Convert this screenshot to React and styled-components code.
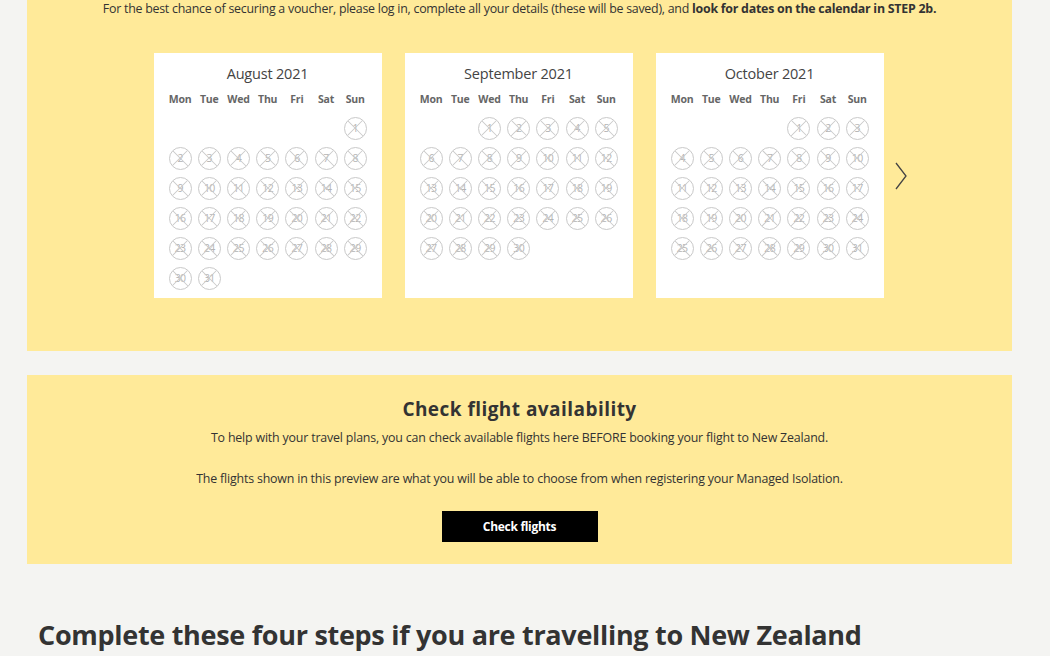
import React from "react";
import styled, { createGlobalStyle } from "styled-components";

const Global = createGlobalStyle`
  html, body { margin: 0; padding: 0; background: #f4f4f2; }
  body { font-family: "Open Sans", "Liberation Sans", sans-serif; color: #333; }
`;

const Page = styled.div`
  width: 1050px;
  height: 656px;
  overflow: hidden;
  background: #f4f4f2;
`;

const Container = styled.div`
  margin: 0 38px 0 27px;
  display: flex;
  flex-direction: column;
  gap: 24px;
`;

const Panel = styled.section`
  background: #ffea99;
  display: flex;
  flex-direction: column;
  align-items: center;
  padding: ${(p) => p.$pad};
`;

const Intro = styled.p`
  margin: 0;
  font-size: 12.4px;
  line-height: 18px;
  letter-spacing: -0.25px;
  color: #333;
  b { font-weight: 700; color: #333; }
`;

const CalRow = styled.div`
  position: relative;
  display: flex;
  gap: 23px;
  margin-top: 35px;
  transform: translateX(-1px);
`;

const Cal = styled.div`
  width: 228px;
  height: 245px;
  background: #fff;
  box-sizing: border-box;
  padding: 11px 12px 0 12px;
`;

const CalTitle = styled.div`
  text-align: center;
  font-size: 14.5px;
  line-height: 20px;
  color: #444;
  letter-spacing: -0.2px;
`;

const Grid = styled.div`
  display: grid;
  grid-template-columns: repeat(7, 29.2px);
  grid-template-rows: 29px;
  grid-auto-rows: 30px;
  justify-items: center;
  align-items: center;
`;

const Dow = styled.div`
  font-size: 10.5px;
  font-weight: 700;
  color: #666;
  letter-spacing: -0.2px;
  line-height: 14px;
`;

const Day = styled.div`
  position: relative;
  width: 23px;
  height: 23px;
  border-radius: 50%;
  border: 1px solid #c9c9c9;
  box-sizing: border-box;
  display: flex;
  align-items: center;
  justify-content: center;
  font-size: 10.5px;
  color: #b4b4b4;
  letter-spacing: -0.6px;
  overflow: hidden;
  &::before, &::after {
    content: "";
    position: absolute;
    left: 50%;
    top: 50%;
    width: 24px;
    height: 1px;
    background: #c9c9c9;
  }
  &::before { transform: translate(-50%, -50%) rotate(45deg); }
  &::after { transform: translate(-50%, -50%) rotate(-45deg); }
`;

const Next = styled.button`
  position: absolute;
  right: -25px;
  top: 108px;
  width: 16px;
  height: 30px;
  padding: 0;
  border: 0;
  background: none;
  cursor: pointer;
`;

const H2 = styled.h2`
  margin: 0;
  font-size: 19px;
  font-weight: 700;
  line-height: 24px;
  color: #333;
  letter-spacing: 0.45px;
`;

const Text = styled.p`
  margin: ${(p) => p.$m};
  font-size: 12.4px;
  line-height: 18px;
  letter-spacing: -0.18px;
  color: #333;
`;

const Button = styled.button`
  margin-top: 23px;
  width: 156px;
  height: 31px;
  background: #000;
  color: #fff;
  border: 0;
  font-family: inherit;
  font-size: 12px;
  font-weight: 700;
  letter-spacing: -0.3px;
  cursor: pointer;
`;

const H1 = styled.h1`
  margin: 53px 0 0 38px;
  font-size: 27px;
  font-weight: 700;
  line-height: 36px;
  color: #333;
  letter-spacing: -0.3px;
  font-family: "Open Sans", "Liberation Sans", sans-serif;
`;

const months = [
  { name: "August 2021", offset: 6, days: 31 },
  { name: "September 2021", offset: 2, days: 30 },
  { name: "October 2021", offset: 4, days: 31 },
];
const dows = ["Mon", "Tue", "Wed", "Thu", "Fri", "Sat", "Sun"];

function Month({ m }) {
  const cells = [];
  for (let i = 0; i < m.offset; i++) cells.push(<span key={"e" + i} />);
  for (let d = 1; d <= m.days; d++) cells.push(<Day key={d}>{d}</Day>);
  return (
    <Cal>
      <CalTitle>{m.name}</CalTitle>
      <Grid>
        {dows.map((d) => (
          <Dow key={d}>{d}</Dow>
        ))}
        {cells}
      </Grid>
    </Cal>
  );
}

export default function App() {
  return (
    <Page>
      <Global />
      <Container>
        <Panel $pad="0 0 53px">
          <Intro>
            For the best chance of securing a voucher, please log in, complete all your details (these will be saved), and{" "}
            <b>look for dates on the calendar in STEP 2b.</b>
          </Intro>
          <CalRow>
            {months.map((m) => (
              <Month key={m.name} m={m} />
            ))}
            <Next aria-label="Next">
              <svg width="16" height="30" viewBox="0 0 16 30">
                <path d="M3 2 L13 15 L3 28" fill="none" stroke="#444" strokeWidth="1.3" />
              </svg>
            </Next>
          </CalRow>
        </Panel>
        <Panel $pad="22px 0 22px">
          <H2>Check flight availability</H2>
          <Text $m="8px 0 0">
            To help with your travel plans, you can check available flights here BEFORE booking your flight to New Zealand.
          </Text>
          <Text $m="23px 0 0">
            The flights shown in this preview are what you will be able to choose from when registering your Managed Isolation.
          </Text>
          <Button>Check flights</Button>
        </Panel>
      </Container>
      <H1>Complete these four steps if you are travelling to New Zealand</H1>
    </Page>
  );
}
